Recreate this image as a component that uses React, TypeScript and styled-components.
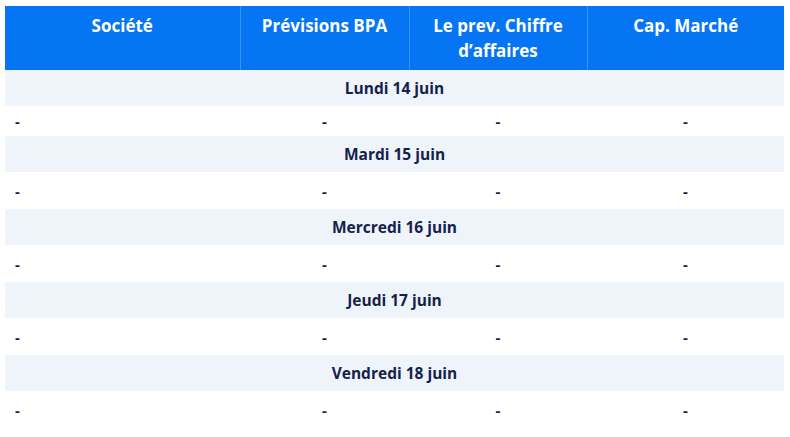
import React from "react";
import styled, { createGlobalStyle } from "styled-components";

const GlobalStyle = createGlobalStyle`
  html, body {
    margin: 0;
    padding: 0;
    background: #ffffff;
  }
  body {
    font-family: "Open Sans", "Liberation Sans", sans-serif;
  }
`;

const Page = styled.div`
  padding: 6px 6px 0 5px;
`;

const Table = styled.table`
  width: 779px;
  border-collapse: collapse;
  table-layout: fixed;
  color: #14224a;
`;

const HeadCell = styled.th<{ width: number }>`
  width: ${({ width }) => width}px;
  height: 64px;
  box-sizing: border-box;
  padding: 7px 4px 0;
  vertical-align: top;
  background: #0575f4;
  color: #ffffff;
  font-size: 17px;
  font-weight: 700;
  line-height: 25px;
  text-align: center;
  border-left: 1px solid #3c93f6;
  &:first-child {
    border-left: none;
  }
`;

const DateCell = styled.td`
  height: 36px;
  padding: 0;
  background: #eff3fa;
  font-size: 15.5px;
  font-weight: 700;
  text-align: center;
  vertical-align: middle;
`;

const DataRow = styled.tr<{ tall?: boolean }>`
  height: ${({ tall }) => (tall ? 37 : 30)}px;
`;

const DataCell = styled.td<{ left?: boolean }>`
  padding: 0 0 0 ${({ left }) => (left ? 10 : 0)}px;
  font-size: 15px;
  font-weight: 700;
  text-align: ${({ left }) => (left ? "left" : "center")};
  vertical-align: middle;
`;

const columns = [
  { label: "Société", width: 235 },
  { label: "Prévisions BPA", width: 169 },
  { label: "Le prev. Chiffre d’affaires", width: 178 },
  { label: "Cap. Marché", width: 197 },
];

const days = [
  "Lundi 14 juin",
  "Mardi 15 juin",
  "Mercredi 16 juin",
  "Jeudi 17 juin",
  "Vendredi 18 juin",
];

const App: React.FC = () => (
  <Page>
    <GlobalStyle />
    <Table>
      <thead>
        <tr>
          {columns.map((c) => (
            <HeadCell key={c.label} width={c.width}>
              {c.label}
            </HeadCell>
          ))}
        </tr>
      </thead>
      <tbody>
        {days.map((day, i) => (
          <React.Fragment key={day}>
            <tr>
              <DateCell colSpan={4}>{day}</DateCell>
            </tr>
            <DataRow tall={i > 0}>
              <DataCell left>-</DataCell>
              <DataCell>-</DataCell>
              <DataCell>-</DataCell>
              <DataCell>-</DataCell>
            </DataRow>
          </React.Fragment>
        ))}
      </tbody>
    </Table>
  </Page>
);

export default App;
